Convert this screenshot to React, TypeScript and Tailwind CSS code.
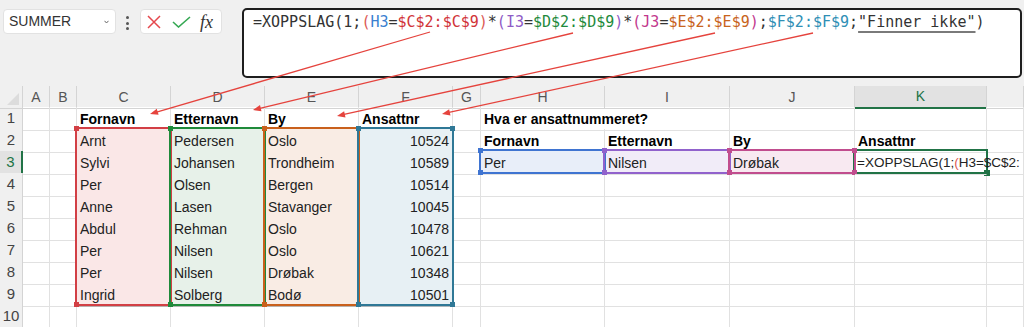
import React from "react";

type Cell = { t?: string; b?: boolean; num?: boolean };

const COLS = ["A", "B", "C", "D", "E", "F", "G", "H", "I", "J", "K", "L"];

const GRID =
  "grid grid-cols-[23px_27px_27px_94px_94px_94px_94px_28px_124px_125px_125px_132px_37px]";

const data: Record<number, Record<string, Cell>> = {
  1: {
    C: { t: "Fornavn", b: true },
    D: { t: "Etternavn", b: true },
    E: { t: "By", b: true },
    F: { t: "Ansattnr", b: true },
    H: { t: "Hva er ansattnummeret?", b: true },
  },
  2: {
    C: { t: "Arnt" },
    D: { t: "Pedersen" },
    E: { t: "Oslo" },
    F: { t: "10524", num: true },
    H: { t: "Fornavn", b: true },
    I: { t: "Etternavn", b: true },
    J: { t: "By", b: true },
    K: { t: "Ansattnr", b: true },
  },
  3: {
    C: { t: "Sylvi" },
    D: { t: "Johansen" },
    E: { t: "Trondheim" },
    F: { t: "10589", num: true },
    H: { t: "Per" },
    I: { t: "Nilsen" },
    J: { t: "Drøbak" },
  },
  4: { C: { t: "Per" }, D: { t: "Olsen" }, E: { t: "Bergen" }, F: { t: "10514", num: true } },
  5: { C: { t: "Anne" }, D: { t: "Lasen" }, E: { t: "Stavanger" }, F: { t: "10045", num: true } },
  6: { C: { t: "Abdul" }, D: { t: "Rehman" }, E: { t: "Oslo" }, F: { t: "10478", num: true } },
  7: { C: { t: "Per" }, D: { t: "Nilsen" }, E: { t: "Oslo" }, F: { t: "10621", num: true } },
  8: { C: { t: "Per" }, D: { t: "Nilsen" }, E: { t: "Drøbak" }, F: { t: "10348", num: true } },
  9: { C: { t: "Ingrid" }, D: { t: "Solberg" }, E: { t: "Bodø" }, F: { t: "10501", num: true } },
  10: {},
};

const rangeFill: Record<string, string> = {
  C: "bg-[#fae7e7] border-b-[#b9b0b0]",
  D: "bg-[#e7f1e9] border-b-[#b0b8b2]",
  E: "bg-[#f9ece4] border-b-[#bab3ae]",
  F: "bg-[#e7f0f4] border-b-[#aeb6ba]",
};

const row3Fill: Record<string, string> = {
  H: "bg-[#e8eef9]",
  I: "bg-[#f1ecf8]",
  J: "bg-[#f8e9f1]",
};

const DARK = "text-[#333]";
const formula: [string, string][] = [
  ["=XOPPSLAG(1;", DARK],
  ["(", "text-[#dc5a55]"],
  ["H3", "text-[#3a7fd0]"],
  ["=", DARK],
  ["$C$2:$C$9", "text-[#d13438]"],
  [")", "text-[#dc5a55]"],
  ["*", DARK],
  ["(", "text-[#8e5bc6]"],
  ["I3", "text-[#8e5bc6]"],
  ["=", DARK],
  ["$D$2:$D$9", "text-[#1e8a3c]"],
  [")", "text-[#8e5bc6]"],
  ["*", DARK],
  ["(", "text-[#c2378d]"],
  ["J3", "text-[#c2378d]"],
  ["=", DARK],
  ["$E$2:$E$9", "text-[#c8641c]"],
  [")", "text-[#c2378d]"],
  [";", DARK],
  ["$F$2:$F$9", "text-[#2f8fb5]"],
  [";", DARK],
  ['"Finner ikke"', "text-[#333] underline decoration-[#7a7a7a] decoration-2 underline-offset-[4px]"],
  [")", DARK],
];

function Range({
  pos,
  border,
  handle,
}: {
  pos: string;
  border: string;
  handle: string;
}) {
  return (
    <div className={`absolute border-2 ${border} ${pos}`}>
      <span className={`absolute -left-[3px] -top-[3px] w-[5px] h-[5px] ${handle}`} />
      <span className={`absolute -right-[3px] -top-[3px] w-[5px] h-[5px] ${handle}`} />
      <span className={`absolute -left-[3px] -bottom-[3px] w-[5px] h-[5px] ${handle}`} />
      <span className={`absolute -right-[3px] -bottom-[3px] w-[5px] h-[5px] ${handle}`} />
    </div>
  );
}

const arrows: [number, number, number, number][] = [
  [430, 32, 150, 114],
  [573, 33, 253, 110],
  [715, 33, 337, 116],
  [813, 33, 442, 114],
];

function Arrows() {
  return (
    <svg
      className="absolute left-0 top-0 z-50 pointer-events-none"
      width={1024}
      height={327}
      viewBox="0 0 1024 327"
    >
      {arrows.map(([x1, y1, x2, y2], i) => {
        const dx = x2 - x1;
        const dy = y2 - y1;
        const len = Math.hypot(dx, dy);
        const ux = dx / len;
        const uy = dy / len;
        const bx = x2 - ux * 8;
        const by = y2 - uy * 8;
        const nx = -uy * 3.2;
        const ny = ux * 3.2;
        return (
          <g key={i}>
            <line x1={x1} y1={y1} x2={bx + ux * 2} y2={by + uy * 2} stroke="#e5433d" strokeWidth={1.3} />
            <polygon
              points={`${x2},${y2} ${bx + nx},${by + ny} ${bx - nx},${by - ny}`}
              fill="#e5433d"
            />
          </g>
        );
      })}
    </svg>
  );
}

export default function App() {
  return (
    <div className="relative w-[1024px] h-[327px] overflow-hidden bg-[#f0f0f0] font-['Liberation_Sans',Arial,sans-serif]">
      {/* Top bar */}
      <div className="h-[86px] flex items-start">
        <div className="relative ml-[3px] mt-[9px] w-[113px] h-[25px] bg-white rounded-[4px] border border-[#e2e2e2] flex items-center pl-[5px] text-[14px] text-[#333]">
          SUMMER
          <svg className="absolute right-[6px] top-[10px]" width="5" height="4" viewBox="0 0 5 4">
            <path d="M0.5 0.8 L2.5 3 L4.5 0.8" stroke="#666" strokeWidth="1" fill="none" />
          </svg>
        </div>
        <div className="ml-[10px] mt-[16px] flex flex-col gap-[2.5px]">
          <span className="block w-[3px] h-[3px] rounded-full bg-[#555]" />
          <span className="block w-[3px] h-[3px] rounded-full bg-[#555]" />
          <span className="block w-[3px] h-[3px] rounded-full bg-[#555]" />
        </div>
        <div className="ml-[11px] mt-[9px] w-[82px] h-[25px] bg-white rounded-[4px] border border-[#e2e2e2] flex items-center">
          <svg className="ml-[6px]" width="14" height="14" viewBox="0 0 14 14">
            <path d="M1 1 L13 13 M13 1 L1 13" stroke="#e5484d" strokeWidth="1.5" fill="none" />
          </svg>
          <svg className="ml-[11px]" width="19" height="12" viewBox="0 0 19 12">
            <path d="M1 6 L6.5 11 L18 1" stroke="#35a853" strokeWidth="1.6" fill="none" />
          </svg>
          <span className="ml-[9px] font-['Liberation_Serif',serif] italic text-[18px] leading-none text-[#333]">
            fx
          </span>
        </div>
        <div className="ml-[20px] mt-[8px] w-[780px] h-[70px] bg-white border-2 border-[#1e1e1e] rounded-[5px] pl-[9px] pt-[2px]">
          <div className="font-['DejaVu_Sans_Mono',monospace] text-[15px] leading-[20px] whitespace-pre">
            {formula.map(([s, c], i) => (
              <span key={i} className={c}>
                {s}
              </span>
            ))}
          </div>
        </div>
      </div>

      {/* Column headers */}
      <div className={`${GRID} h-[21px] bg-[#f0f0f0] text-[14px]`}>
        <div className="relative border-r border-b border-[#d4d4d4]">
          <svg className="absolute right-[3px] bottom-[3px]" width="12" height="12" viewBox="0 0 12 12">
            <polygon points="12,0 12,12 0,12" fill="#dcdcdc" />
          </svg>
        </div>
        {COLS.map((c) =>
          c === "K" ? (
            <div
              key={c}
              className="flex items-center justify-center bg-[#e2e2e2] border-r border-r-[#d4d4d4] border-b-2 border-b-[#217346] text-[#217346]"
            >
              {c}
            </div>
          ) : (
            <div
              key={c}
              className="flex items-center justify-center border-r border-b border-[#d4d4d4] text-[#555]"
            >
              {c === "L" ? "" : c}
            </div>
          )
        )}
      </div>

      {/* Rows */}
      <div className="bg-white">
        {Array.from({ length: 10 }, (_, i) => i + 1).map((r) => (
          <div key={r} className={`${GRID} h-[22px] text-[14px]`}>
            {r === 3 ? (
              <div className="flex items-center justify-center bg-[#e2e2e2] border-r-2 border-r-[#217346] border-b border-b-[#d4d4d4] text-[#217346] text-[15px]">
                {r}
              </div>
            ) : (
              <div className="flex items-center justify-center bg-[#f0f0f0] border-r border-b border-[#d4d4d4] text-[#444] text-[15px]">
                {r}
              </div>
            )}
            {COLS.map((c) => {
              const cell = data[r][c];
              let fill = "";
              if (r >= 2 && r <= 9 && rangeFill[c]) fill = rangeFill[c];
              if (r === 3 && row3Fill[c]) fill = row3Fill[c];
              const over = (r === 1 && c === "H") || (r === 3 && c === "K");
              const base =
                "relative flex items-center pt-[2px] px-[3px] whitespace-nowrap border-r border-b border-[#e1e1e1]";
              const cls = `${base} ${fill} ${over ? "border-r-transparent z-10" : "overflow-hidden"} ${
                cell?.num ? "justify-end" : ""
              } ${cell?.b ? "font-bold text-black" : "text-[#222]"}`;
              if (r === 3 && c === "K") {
                return (
                  <div key={c} className={`${cls} pl-[2px]`}>
                    <span className="text-[#222] text-[13.5px]">
                      =XOPPSLAG(1;<span className="text-[#dc5a55]">(</span>H3=$C$2:
                    </span>
                  </div>
                );
              }
              return (
                <div key={c} className={cls}>
                  {cell?.t ?? ""}
                </div>
              );
            })}
          </div>
        ))}
      </div>

      {/* Range overlays */}
      <Range pos="left-[75px] top-[127px] w-[97px] h-[179px]" border="border-[#d23f45]" handle="bg-[#d23f45]" />
      <Range pos="left-[169px] top-[127px] w-[97px] h-[179px]" border="border-[#1f8a3a]" handle="bg-[#1f8a3a]" />
      <Range pos="left-[263px] top-[127px] w-[97px] h-[179px]" border="border-[#c9601c]" handle="bg-[#c9601c]" />
      <Range pos="left-[357px] top-[127px] w-[97px] h-[179px]" border="border-[#2f7896]" handle="bg-[#2f7896]" />

      <div className="absolute left-[853px] top-[149px] w-[135px] h-[25px] border-2 border-[#217346]">
        <span className="absolute -right-[4px] -bottom-[4px] w-[6px] h-[6px] bg-[#217346]" />
      </div>
      <Range pos="left-[479px] top-[149px] w-[127px] h-[25px]" border="border-[#3f74d1]" handle="bg-[#3f74d1]" />
      <Range pos="left-[603px] top-[149px] w-[128px] h-[25px]" border="border-[#9162cc]" handle="bg-[#9162cc]" />
      <Range pos="left-[728px] top-[149px] w-[128px] h-[25px]" border="border-[#c14d8e]" handle="bg-[#c14d8e]" />

      <Arrows />
    </div>
  );
}
